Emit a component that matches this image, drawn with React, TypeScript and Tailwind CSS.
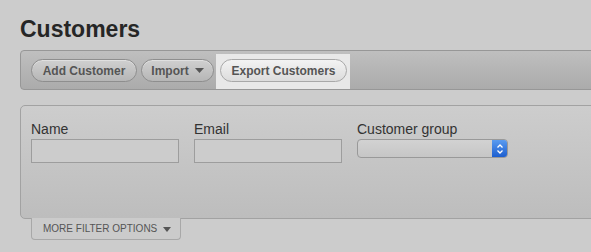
import React from "react";

function PillButton({ children }: { children: React.ReactNode }) {
  return (
    <div className="h-[23px] rounded-full border border-[#8e8e8e] bg-gradient-to-b from-[#d0d0d0] to-[#b6b6b6] shadow-[inset_0_1px_0_rgba(255,255,255,0.35)] flex items-center justify-center text-[12px] font-bold text-[#555555] leading-none">
      {children}
    </div>
  );
}

export default function App() {
  return (
    <div
      className="w-[591px] h-[252px] overflow-hidden bg-[#cccccc] pl-[20px]"
      style={{ fontFamily: '"Liberation Sans", Arial, Helvetica, sans-serif' }}
    >
      <h1 className="pt-[15px] text-[23px] leading-[28px] font-bold text-[#262626]">Customers</h1>

      <div className="mt-[7px] w-[620px] h-[40px] rounded-[4px] border border-[#979797] bg-gradient-to-b from-[#bfbfbf] to-[#ababab] flex items-start pl-[10px]">
        <div className="mt-[8px] w-[106px]">
          <PillButton>Add Customer</PillButton>
        </div>
        <div className="mt-[8px] ml-[4px] w-[73px]">
          <PillButton>
            <span>Import</span>
            <svg width="9" height="5" viewBox="0 0 9 5" className="ml-[6px]">
              <path d="M0 0 L9 0 L4.5 5 Z" fill="#555555" />
            </svg>
          </PillButton>
        </div>
        <div className="ml-[2px] mt-[3px] h-[35px] w-[134px] bg-[#e8e8e8] pl-[4px] pt-[5px]">
          <div className="w-[127px] h-[23px] rounded-full border border-[#a8a8a8] bg-gradient-to-b from-[#f3f3f3] to-[#dcdcdc] flex items-center justify-center text-[12px] font-bold text-[#555555] leading-none">
            Export Customers
          </div>
        </div>
      </div>

      <div className="mt-[15px] w-[620px] h-[114px] rounded-[5px] border border-[#a2a2a2] bg-gradient-to-b from-[#cdcdcd] to-[#bdbdbd] pl-[10px] pt-[15px] flex gap-[15px]">
        <div className="w-[148px]">
          <div className="text-[14px] leading-[16px] text-[#333333]">Name</div>
          <div className="mt-[2px] h-[24px] border border-[#9d9d9d] bg-[#cccccc]" />
        </div>
        <div className="w-[148px]">
          <div className="text-[14px] leading-[16px] text-[#333333]">Email</div>
          <div className="mt-[2px] h-[24px] border border-[#9d9d9d] bg-[#cccccc]" />
        </div>
        <div className="w-[151px]">
          <div className="text-[14px] leading-[16px] text-[#333333]">Customer group</div>
          <div className="mt-[2px] h-[19px] rounded-[4px] border border-[#999999] bg-gradient-to-b from-[#d2d2d2] to-[#c6c6c6] flex justify-end overflow-hidden">
            <div className="w-[15px] h-full bg-gradient-to-b from-[#5a9bf0] to-[#1c5ecf] flex items-center justify-center">
              <svg width="8" height="12" viewBox="0 0 8 12">
                <path d="M1.5 4.5 L4 2 L6.5 4.5" fill="none" stroke="#ffffff" strokeWidth="1.3" />
                <path d="M1.5 7.5 L4 10 L6.5 7.5" fill="none" stroke="#ffffff" strokeWidth="1.3" />
              </svg>
            </div>
          </div>
        </div>
      </div>

      <div className="ml-[11px] mt-[-1px] w-[150px] h-[22px] border border-t-0 border-[#a8a8a8] rounded-b-[4px] bg-[#cbcbcb] flex items-center pl-[11px] pr-[9px]">
        <span className="text-[10px] leading-none text-[#555555] pt-[1px]">MORE FILTER OPTIONS</span>
        <svg width="8" height="5" viewBox="0 0 8 5" className="ml-auto mt-[1px]">
          <path d="M0 0 L8 0 L4 5 Z" fill="#555555" />
        </svg>
      </div>
    </div>
  );
}
